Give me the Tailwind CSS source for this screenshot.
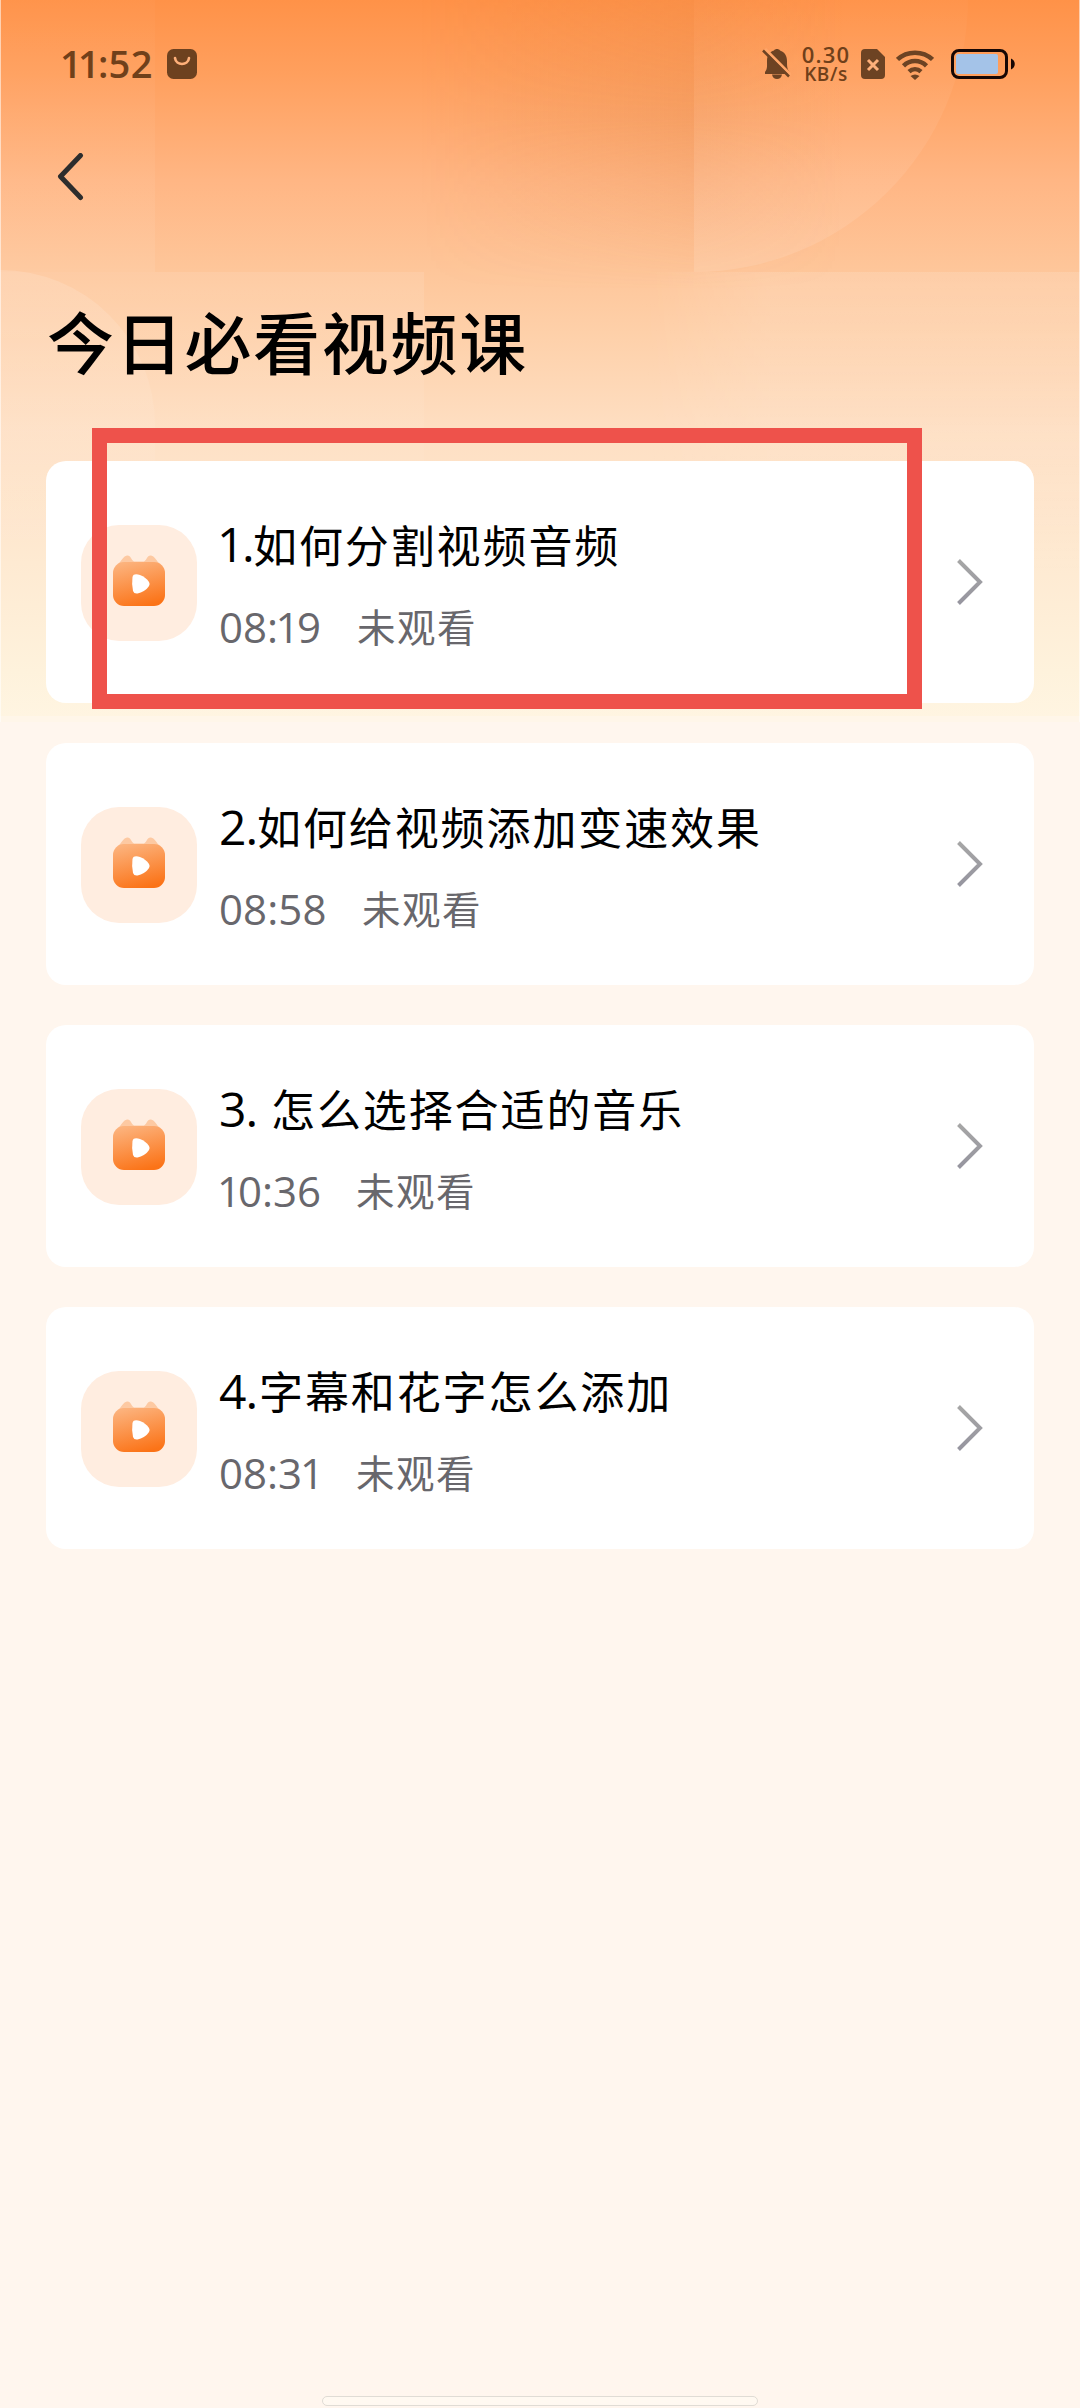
<!DOCTYPE html>
<html lang="zh-CN">
<head>
<meta charset="utf-8">
<title>今日必看视频课</title>
<script src="https://cdn.jsdelivr.net/npm/@tailwindcss/browser@4"></script>
</head>
<body class="bg-[#fff6ee]">
<svg width="0" height="0" class="absolute">
  <defs>
    <linearGradient id="tv" x1="0.3" y1="0" x2="0.6" y2="1"><stop offset="0" stop-color="#fcb27c"/><stop offset="1" stop-color="#fb7317"/></linearGradient>
    <linearGradient id="chev" x1="0" y1="0" x2="0" y2="1"><stop offset="0" stop-color="#a6a6a6"/><stop offset="1" stop-color="#96959f"/></linearGradient>
    <symbol id="video" viewBox="0 0 52 51">
      <path d="M5 9C8 7 10 1 14 .5S18 5 21 6.500H31C34 5 34 0 38 .5S44 7 47 9Z" fill="#fdc9a2"/>
      <rect x="0" y="7" width="52" height="44" rx="11" fill="url(#tv)"/>
      <path d="M19.500 22C20 18.500 24 19 27 20C31 21.500 34 24 36 27Q37.300 29 36 31C33 35.500 29 37.500 24.500 38.500Q21 39 20 36Q18.500 29 19.500 22Z" fill="#fff"/>
    </symbol>
    <symbol id="next" viewBox="0 0 28 48"><path d="M2.500 2.500L24 24L2.500 45.500" fill="none" stroke="url(#chev)" stroke-width="4"/></symbol>
  </defs>
</svg>
<main class="relative isolate flex h-[2408px] w-[1080px] flex-col overflow-hidden font-['Noto_Sans_CJK_SC',sans-serif]">
  <svg class="absolute inset-x-0 top-0 -z-10" width="1080" height="722" viewBox="0 0 1080 722">
    <defs>
      <linearGradient id="bg" x1="0" y1="0" x2="0" y2="1">
        <stop offset="0" stop-color="#ff9248"/><stop offset=".1" stop-color="#ff9f5d"/><stop offset=".25" stop-color="#ffb684"/><stop offset=".375" stop-color="#fec69a"/><stop offset=".46" stop-color="#fed0a9"/><stop offset=".6" stop-color="#fedfc3"/><stop offset=".78" stop-color="#feead2"/><stop offset=".93" stop-color="#fef2dc"/><stop offset="1" stop-color="#fff5e2"/>
      </linearGradient>
      <linearGradient id="shade" x1="0" y1="0" x2="1" y2="0"><stop offset="0" stop-color="#d98245" stop-opacity="0"/><stop offset="1" stop-color="#d98245" stop-opacity=".24"/></linearGradient>
      <linearGradient id="shade2" x1="1" y1="0" x2="0" y2="0"><stop offset="0" stop-color="#d98245" stop-opacity="0"/><stop offset="1" stop-color="#d98245" stop-opacity=".17"/></linearGradient>
      <linearGradient id="fadeV" x1="0" y1="0" x2="0" y2="1"><stop offset="0" stop-color="#fff" stop-opacity=".6"/><stop offset=".4" stop-color="#fff"/><stop offset="1" stop-color="#fff" stop-opacity="0"/></linearGradient>
      <mask id="fade"><rect width="1080" height="290" fill="url(#fadeV)"/></mask>
      <linearGradient id="light" x1="0" y1="0" x2="0" y2="1"><stop offset="0" stop-color="#fff" stop-opacity=".02"/><stop offset="1" stop-color="#fff" stop-opacity=".11"/></linearGradient>
      <linearGradient id="lightL" x1="0" y1="0" x2="0" y2="1"><stop offset="0" stop-color="#fff" stop-opacity=".02"/><stop offset="1" stop-color="#fff" stop-opacity=".07"/></linearGradient>
      <linearGradient id="lower" x1="0" y1="0" x2="0" y2="1"><stop offset="0" stop-color="#fff" stop-opacity=".14"/><stop offset="1" stop-color="#fff" stop-opacity="0"/></linearGradient>
      <linearGradient id="sideways" x1="0" y1="0" x2="1" y2="0"><stop offset="0" stop-color="#fff" stop-opacity="0"/><stop offset=".3" stop-color="#fff"/><stop offset="1" stop-color="#fff"/></linearGradient>
      <mask id="fadeSide"><rect x="640" y="272" width="440" height="300" fill="url(#sideways)"/></mask>
    </defs>
    <rect width="1080" height="722" fill="url(#bg)"/>
    <g mask="url(#fade)"><rect x="420" width="274" height="290" fill="url(#shade)"/><rect x="694" width="150" height="290" fill="url(#shade2)"/></g>
    <rect width="155" height="272" fill="url(#lightL)"/>
    <path d="M694 0H968A274 274 0 0 1 694 272Z" fill="url(#light)"/>
    <rect x="640" y="272" width="440" height="300" fill="url(#lower)" mask="url(#fadeSide)"/>
    <rect x="0" y="272" width="424" height="300" fill="url(#lower)" opacity=".7"/>
    <path d="M0 270A155 155 0 0 1 155 425V560H0Z" fill="url(#lower)"/>
    <rect y="716" width="1080" height="6" fill="#fff6ee" fill-opacity=".6"/>
    <path d="M.5 0V722M1079.500 0V722" stroke="#fff" stroke-opacity=".55"/>
  </svg>

  <header class="flex h-[128px] items-start pt-[43px] pl-[61px] font-['Open_Sans'] font-semibold text-[#70401a]">
    <div class="-mt-px flex h-[42px] w-[106px] items-center text-[38px] leading-[42px]"><span class="-ml-[1px] tracking-[-3.700px]">11</span><span class="ml-[2px]">:</span><span class="tracking-[0.500px]">52</span></div>
    <svg class="mt-[6px]" width="30" height="30" viewBox="0 0 30 30"><rect width="30" height="30" rx="6.500" fill="#6d411f"/><path d="M8 9C9 17 21 17 22 9" fill="none" stroke="#ffb07a" stroke-width="2.600" stroke-linecap="round"/></svg>
    <svg class="mt-[5px] ml-[565px]" width="29" height="32" viewBox="0 0 29 32" fill="#6d4323"><path d="M3 24C5.500 21 5 18 5 13C5 7 8 3.500 12 2.500C13 .5 17 .5 18 2.500C22.500 4 25 7.500 25 13C25 18 25 21 27.500 24V26H3ZM10 26.500H20C19.500 29.500 17.500 31 15 31S10.500 29.500 10 26.500Z"/><path d="M3 1L29 27" stroke="#ffa668" stroke-width="3"/><path d="M1 2.500L27 28.500" stroke="#6d4323" stroke-width="2.500"/></svg>
    <div class="ml-[9px] flex w-[52px] flex-col items-center"><span class="text-[22px] leading-[23px] tracking-[1.200px]">0.30</span><span class="-mt-px text-[19px] leading-[19px] tracking-[.6px]">KB/s</span></div>
    <svg class="mt-[6px] ml-[9px]" width="24" height="30" viewBox="0 0 24 30"><path d="M4 0H16L24 8V26Q24 30 20 30H4Q0 30 0 26V4Q0 0 4 0Z" fill="#6d4323"/><path d="M7 11L17 21M17 11L7 21" stroke="#ffb07a" stroke-width="3"/></svg>
    <svg class="mt-[7px] ml-[11px]" width="38" height="30" viewBox="0 0 38 30" fill="none" stroke="#6d4323" stroke-width="4.500"><path d="M1.500 9.500C11 .4 27 .4 36.500 9.500M7.500 15.900C14 9.400 24 9.400 30.500 15.900M13 21.700C16.500 18.500 21.500 18.500 25 21.700"/><path d="M14.500 26Q19 23 23.500 26L19 30Z" fill="#6d4323" stroke="none"/></svg>
    <svg class="mt-[6px] ml-[17px]" width="65" height="30" viewBox="0 0 65 30"><rect x="1.500" y="1.500" width="54" height="27" rx="6.500" fill="none" stroke="#170704" stroke-width="3"/><rect x="5" y="5" width="42" height="20" rx="2" fill="#a4c3e8"/><path d="M60 9.500C65 11.500 65 18.500 60 20.500Z" fill="#170704"/></svg>
  </header>

  <nav class="h-[172px] pt-[25px] pl-[56px]">
    <svg width="30" height="48" viewBox="0 0 30 48"><path d="M24.500 2.500L4.500 23.500L24.500 44.500" fill="none" stroke="#2d2d2d" stroke-width="5" stroke-linecap="round" stroke-linejoin="round"/></svg>
  </nav>

  <h1 class="h-[161px] pl-[47px] text-[67px] leading-[80px] font-medium tracking-[1.700px] text-black">今日必看视频课</h1>

  <div class="flex flex-col gap-[40px] pr-[46px] pl-[46px]">
    <section class="flex h-[242px] rounded-[20px] bg-white pl-[35px]">
      <div class="mt-[64px] flex size-[116px] justify-center rounded-[38px] bg-[#ffede0] pt-[30px]"><svg width="52" height="51"><use href="#video"/></svg></div>
      <div class="ml-[22px] flex w-[737px] flex-col gap-[26px] pt-[53px]">
        <h2 class="flex h-[60px] text-[44px] leading-[60px] tracking-[1.900px] text-black"><span class="-ml-[2px] w-[36px] font-['Open_Sans'] text-[48px] tracking-[-2.500px]">1.</span><span>如何分割视频音频</span></h2>
        <p class="flex h-[50px] text-[38.500px] leading-[50px] tracking-[1.500px] text-[#68676c]"><span class="w-[138px] pt-[2px] font-['Open_Sans'] text-[42px] tracking-normal">08<span class="tracking-[-2.500px]">:1</span>9</span><span>未观看</span></p>
      </div>
      <svg class="mt-[97px]" width="28" height="48"><use href="#next"/></svg>
    </section>
    <section class="flex h-[242px] rounded-[20px] bg-white pl-[35px]">
      <div class="mt-[64px] flex size-[116px] justify-center rounded-[38px] bg-[#ffede0] pt-[30px]"><svg width="52" height="51"><use href="#video"/></svg></div>
      <div class="ml-[22px] flex w-[737px] flex-col gap-[26px] pt-[53px]">
        <h2 class="flex h-[60px] text-[44px] leading-[60px] tracking-[1.900px] text-black"><span class="w-[38px] pt-px font-['Open_Sans'] text-[48px] tracking-[-1px]">2.</span><span>如何给视频添加变速效果</span></h2>
        <p class="flex h-[50px] text-[38.500px] leading-[50px] tracking-[1.500px] text-[#68676c]"><span class="w-[143px] pt-[2px] font-['Open_Sans'] text-[42px] tracking-[.1px]">08:58</span><span>未观看</span></p>
      </div>
      <svg class="mt-[97px]" width="28" height="48"><use href="#next"/></svg>
    </section>
    <section class="flex h-[242px] rounded-[20px] bg-white pl-[35px]">
      <div class="mt-[64px] flex size-[116px] justify-center rounded-[38px] bg-[#ffede0] pt-[30px]"><svg width="52" height="51"><use href="#video"/></svg></div>
      <div class="ml-[22px] flex w-[737px] flex-col gap-[26px] pt-[53px]">
        <h2 class="flex h-[60px] text-[44px] leading-[60px] tracking-[1.900px] text-black"><span class="w-[52px] pt-px font-['Open_Sans'] text-[48px] tracking-[-1px]">3.</span><span>怎么选择合适的音乐</span></h2>
        <p class="flex h-[50px] text-[38.500px] leading-[50px] tracking-[1.500px] text-[#68676c]"><span class="-ml-[2px] w-[139px] pt-[2px] font-['Open_Sans'] text-[42px] tracking-normal"><span class="tracking-[-3px]">1</span>0:36</span><span>未观看</span></p>
      </div>
      <svg class="mt-[97px]" width="28" height="48"><use href="#next"/></svg>
    </section>
    <section class="flex h-[242px] rounded-[20px] bg-white pl-[35px]">
      <div class="mt-[64px] flex size-[116px] justify-center rounded-[38px] bg-[#ffede0] pt-[30px]"><svg width="52" height="51"><use href="#video"/></svg></div>
      <div class="ml-[22px] flex w-[737px] flex-col gap-[26px] pt-[53px]">
        <h2 class="flex h-[60px] text-[44px] leading-[60px] tracking-[1.900px] text-black"><span class="w-[40px] pt-px font-['Open_Sans'] text-[48px] tracking-[-1px]">4.</span><span>字幕和花字怎么添加</span></h2>
        <p class="flex h-[50px] text-[38.500px] leading-[50px] tracking-[1.500px] text-[#68676c]"><span class="w-[137px] pt-[2px] font-['Open_Sans'] text-[42px] tracking-normal">08:<span class="tracking-[-2px]">31</span></span><span>未观看</span></p>
      </div>
      <svg class="mt-[97px]" width="28" height="48"><use href="#next"/></svg>
    </section>
  </div>

  <!-- highlight around the first lesson -->
  <div class="absolute top-[427.500px] left-[91.500px] h-[281px] w-[830.500px] border-[15px] border-[#ee524b]"></div>

  <div class="mx-auto mt-auto mb-[2px] h-[10px] w-[436px] rounded-full border border-[#e0dcd5] bg-[#fff9f1]"></div>
</main>
</body>
</html>
